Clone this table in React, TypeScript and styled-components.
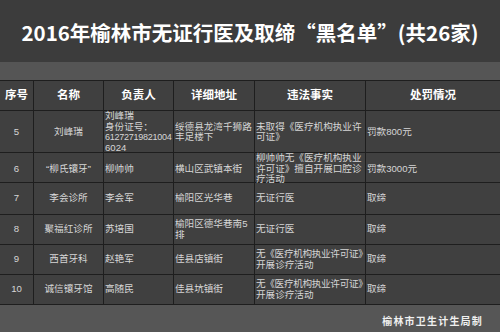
import React from "react";
import styled, { createGlobalStyle } from "styled-components";

const Global = createGlobalStyle`
  html, body { margin: 0; padding: 0; background: #555; }
  body { width: 500px; height: 332px; overflow: hidden; font-family: "Noto Sans CJK SC", "Noto Sans", sans-serif; }
`;

const COLS = "34px 70px 70px 81px 111px 134px";

const Page = styled.div`
  width: 500px;
  height: 332px;
  display: flex;
  flex-direction: column;
  background: #555555;
`;

const TitleBar = styled.div`
  height: 62px;
  background: #3c3c3c;
  display: flex;
  align-items: center;
  justify-content: center;
  color: #ffffff;
  font-family: "Noto Sans CJK SC", sans-serif;
  font-size: 20.5px;
  font-weight: 700;
  padding-top: 1px;
  box-sizing: border-box;
`;

const Gap = styled.div`
  height: 18px;
  background: #555555;
`;

const Table = styled.div`
  display: flex;
  flex-direction: column;
  background: #404040;
  border-top: 1px solid #1e1e1e;
`;

const Row = styled.div<{ $h: number }>`
  display: grid;
  grid-template-columns: ${COLS};
  height: ${(p) => p.$h}px;
  box-sizing: border-box;
  border-bottom: 1px solid #1e1e1e;
`;

const Cell = styled.div<{ $center?: boolean; $head?: boolean }>`
  box-sizing: border-box;
  border-right: 1px solid #1e1e1e;
  display: flex;
  flex-direction: column;
  justify-content: center;
  align-items: ${(p) => (p.$center ? "center" : "flex-start")};
  padding-left: ${(p) => (p.$center ? 0 : 1)}px;
  color: ${(p) => (p.$head ? "#ffffff" : "#d6d6d6")};
  font-family: "Liberation Sans", "Noto Sans CJK SC", sans-serif;
  font-size: ${(p) => (p.$head ? 11.5 : 9.6)}px;
  font-weight: ${(p) => (p.$head ? 700 : 400)};
  line-height: 10.5px;
  white-space: nowrap;
  overflow: visible;
  &:last-child { border-right: none; }
`;

const Line = styled.span<{ $kind?: "id" | "long" }>`
  display: block;
  font-size: ${(p) => (p.$kind === "id" ? "9px" : "inherit")};
  letter-spacing: ${(p) => (p.$kind === "id" ? "-0.25px" : p.$kind === "long" ? "-0.3px" : "0")};
`;

const Footer = styled.div`
  flex: 1;
  background: #565656;
  display: flex;
  align-items: center;
  justify-content: flex-end;
  padding-right: 17px;
  padding-top: 4px;
  color: #f0f0f0;
  font-size: 10px;
  font-weight: 700;
  letter-spacing: 1.2px;
`;

type Item = {
  no: string;
  name: string;
  person: string[];
  addr: string[];
  fact: string[];
  penalty: string;
  h: number;
};

const headers = ["序号", "名称", "负责人", "详细地址", "违法事实", "处罚情况"];

const rows: Item[] = [
  { no: "5", name: "刘峰瑞", person: ["刘峰瑞", "身份证号：", "61272719821004", "6024"], addr: ["绥德县龙湾千狮路", "丰足楼下"], fact: ["未取得《医疗机构执业许", "可证》"], penalty: "罚款800元", h: 42 },
  { no: "6", name: "“柳氏镶牙”", person: ["柳帅帅"], addr: ["横山区武镇本街"], fact: ["柳帅帅无《医疗机构执业", "许可证》擅自开展口腔诊", "疗活动"], penalty: "罚款3000元", h: 30 },
  { no: "7", name: "李会诊所", person: ["李会军"], addr: ["榆阳区光华巷"], fact: ["无证行医"], penalty: "取缔", h: 32 },
  { no: "8", name: "聚福红诊所", person: ["苏培国"], addr: ["榆阳区德华巷南5", "排"], fact: ["无证行医"], penalty: "取缔", h: 30 },
  { no: "9", name: "西首牙科", person: ["赵艳军"], addr: ["佳县店镇街"], fact: ["无《医疗机构执业许可证》", "开展诊疗活动"], penalty: "取缔", h: 30 },
  { no: "10", name: "诚信镶牙馆", person: ["高随民"], addr: ["佳县坑镇街"], fact: ["无《医疗机构执业许可证》", "开展诊疗活动"], penalty: "取缔", h: 30 },
];

const kindOf = (t: string): "id" | "long" | undefined =>
  /^\d{6,}$/.test(t) ? "id" : t.length >= 12 ? "long" : undefined;

const Lines = ({ items }: { items: string[] }) => (
  <>
    {items.map((t, i) => (
      <Line key={i} $kind={kindOf(t)}>{t}</Line>
    ))}
  </>
);

export default function App() {
  return (
    <>
      <Global />
      <Page>
        <TitleBar>2016年榆林市无证行医及取缔“黑名单”(共26家)</TitleBar>
        <Gap />
        <Table>
          <Row $h={30}>
            {headers.map((h) => (
              <Cell key={h} $center $head>{h}</Cell>
            ))}
          </Row>
          {rows.map((r) => (
            <Row key={r.no} $h={r.h}>
              <Cell $center>{r.no}</Cell>
              <Cell $center>{r.name}</Cell>
              <Cell><Lines items={r.person} /></Cell>
              <Cell><Lines items={r.addr} /></Cell>
              <Cell><Lines items={r.fact} /></Cell>
              <Cell>{r.penalty}</Cell>
            </Row>
          ))}
        </Table>
        <Footer>榆林市卫生计生局制</Footer>
      </Page>
    </>
  );
}
